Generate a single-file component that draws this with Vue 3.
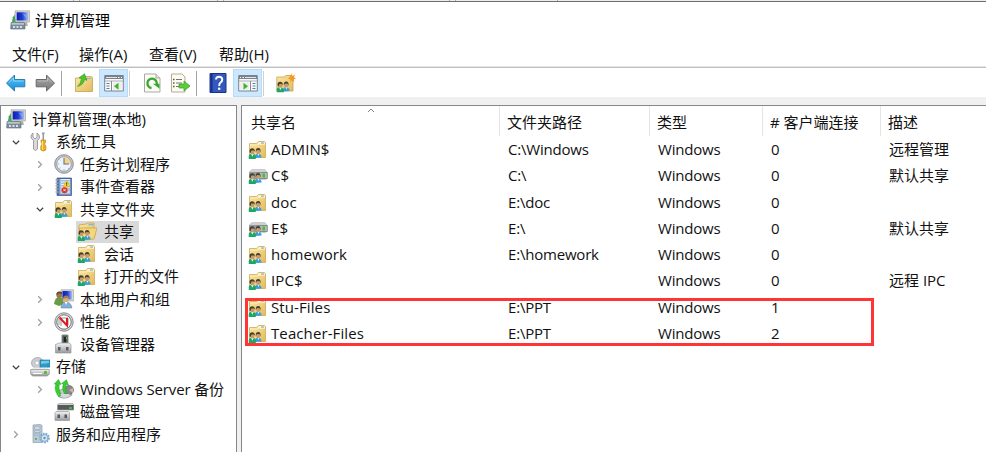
<script setup>
const menus = [
  { label: '文件(F)', width: 67 },
  { label: '操作(A)', width: 70 },
  { label: '查看(V)', width: 70 },
  { label: '帮助(H)', width: 70 },
]

const tree = [
  { label: '计算机管理(本地)', icon: 'computer', level: 0, root: true },
  { label: '系统工具', icon: 'tools', level: 1, arrow: 'open' },
  { label: '任务计划程序', icon: 'clock', level: 2, arrow: 'closed' },
  { label: '事件查看器', icon: 'events', level: 2, arrow: 'closed' },
  { label: '共享文件夹', icon: 'share', level: 2, arrow: 'open' },
  { label: '共享', icon: 'shareopen', level: 3, selected: true },
  { label: '会话', icon: 'share', level: 3 },
  { label: '打开的文件', icon: 'share', level: 3 },
  { label: '本地用户和组', icon: 'users', level: 2, arrow: 'closed' },
  { label: '性能', icon: 'perf', level: 2, arrow: 'closed' },
  { label: '设备管理器', icon: 'device', level: 2 },
  { label: '存储', icon: 'storage', level: 1, arrow: 'open' },
  { label: 'Windows Server 备份', icon: 'backup', level: 2, arrow: 'closed' },
  { label: '磁盘管理', icon: 'disk', level: 2 },
  { label: '服务和应用程序', icon: 'services', level: 1, arrow: 'closed' },
]

const shares = [
  { name: 'ADMIN$', path: 'C:\\Windows', count: 0, desc: '远程管理' },
  { name: 'C$', path: 'C:\\', count: 0, desc: '默认共享', drive: true },
  { name: 'doc', path: 'E:\\doc', count: 0, desc: '' },
  { name: 'E$', path: 'E:\\', count: 0, desc: '默认共享', drive: true },
  { name: 'homework', path: 'E:\\homework', count: 0, desc: '' },
  { name: 'IPC$', path: '', count: 0, desc: '远程 IPC' },
  { name: 'Stu-Files', path: 'E:\\PPT', count: 1, desc: '' },
  { name: 'Teacher-Files', path: 'E:\\PPT', count: 2, desc: '' },
]
</script>

<template>
  <div class="window">
    <svg class="defs" aria-hidden="true">
      <defs>
        <linearGradient id="gFolder" x1="0" y1="0" x2="1" y2="1">
          <stop offset="0" stop-color="#fbe9a6" /><stop offset="1" stop-color="#e3ba5c" />
        </linearGradient>
        <linearGradient id="gBlue" x1="0" y1="0" x2="0" y2="1">
          <stop offset="0" stop-color="#5cc8f8" /><stop offset="1" stop-color="#1689dc" />
        </linearGradient>
        <linearGradient id="gGray" x1="0" y1="0" x2="0" y2="1">
          <stop offset="0" stop-color="#aaaaaa" /><stop offset="1" stop-color="#777777" />
        </linearGradient>
        <linearGradient id="gMetal" x1="0" y1="0" x2="0" y2="1">
          <stop offset="0" stop-color="#f4f4f6" /><stop offset="1" stop-color="#96989d" />
        </linearGradient>
        <linearGradient id="gScreen" x1="0" y1="0" x2="1" y2="0">
          <stop offset="0" stop-color="#0c1eb4" /><stop offset=".5" stop-color="#1e3bd6" /><stop offset="1" stop-color="#a4bdf6" />
        </linearGradient>
      </defs>
      <symbol id="people" viewBox="0 0 14 12">
        <path d="M6.500 11V9Q7 6.500 9.500 6.500T13 9v1.500z" fill="#3a9fd6" />
        <path d="M0 12V9Q.5 6.800 3.500 6.800T7.300 9v3z" fill="#1fa566" />
        <path d="m2.500 6.800 1.400 3 1.400-3zM8.800 6.500 10 9l1-2.500z" fill="#e7f5ec" />
        <ellipse cx="3.900" cy="4.700" rx="2.100" ry="2.600" fill="#c99a6a" />
        <ellipse cx="9.700" cy="4.400" rx="2" ry="2.500" fill="#c99a6a" />
        <path d="M1.200 5.500Q.4 1.300 3.700 1.300 6.500 1.300 6.200 4.500L4.800 3.200 2.600 3.800 2.300 6zM7.300 5Q6.900 1 9.700 1t2.400 4.500L11.300 3.300 8.500 3z" fill="#46402f" />
      </symbol>
      <symbol id="folderbody" viewBox="0 0 20 20">
        <path d="M1.500 3.500H8.500L10.500 1.500H16.500L17.500 2.500V17.500H1.500z" fill="url(#gFolder)" stroke="#cfab58" stroke-width=".8" />
        <path d="M10.500 2.200H17V3.800H9.500z" fill="#fffbe9" /><path d="M13 2.500h3v1.200h-3z" fill="#67aae8" />
        <path d="M2 5H9.500L11 4.300H17" fill="none" stroke="#fff2bd" stroke-width=".9" />
      </symbol>
      <symbol id="share" viewBox="0 0 20 20">
        <use href="#folderbody" width="20" height="20" /><use href="#people" x=".5" y="7" width="14" height="12" />
      </symbol>
      <symbol id="shareopen" viewBox="0 0 20 20">
        <path d="M2 3 9 2 11 1H17V15L7 18H2z" fill="url(#gFolder)" stroke="#c9a34b" stroke-width=".8" />
        <path d="M12 2h4v1.300h-5z" fill="#78b5eb" />
        <path d="M2 6H20L17 17 5 18z" fill="#f4d67c" stroke="#c99e3b" stroke-width=".7" />
        <use href="#people" x=".5" y="7" width="14" height="12" />
      </symbol>
      <symbol id="drive" viewBox="0 0 20 20">
        <path d="M1.500 5.500 4 3.500H17L19.500 6.500V12L18 13.500H3L1 12V7z" fill="#96989d" />
        <path d="M1.500 6 4 3.500H17L19 6z" fill="#cfd0d4" /><path d="M9 6.500h10.300v6H9z" fill="#b9babd" stroke="#74767a" stroke-width=".6" />
        <path d="M14.500 7.500H17v4h-2.500z" fill="#3dc529" />
        <use href="#people" x=".5" y="6" width="14" height="12" />
      </symbol>
      <symbol id="computer" viewBox="0 0 20 20">
        <path d="M5 .8H19.500V12H5z" fill="#d5d3cb" stroke="#aaa99f" stroke-width=".7" />
        <path d="M6.700 2.300H18V10.500H6.700z" fill="url(#gScreen)" /><path d="M12 3 18 6V10z" fill="#91aaf0" opacity=".7" />
        <path d="M9 12h8l1 4H8z" fill="#b4b3ab" />
        <path d="M2.800 7.300 4.700 4.500 5.500 12H2z" fill="#3ca85b" /><path d="M1 12.500h12.500l1.500 1.200v5.300H.7z" fill="#7c8c9b" stroke="#596a78" stroke-width=".6" />
        <path d="M1.500 13H14v1.700H1.500z" fill="#bac5ce" /><path d="M3 16h2v2H3zm3.500 0h2v2h-2zm3.500 0h2v2h-2z" fill="#d6dfe5" />
      </symbol>
      <symbol id="tools" viewBox="0 0 20 20">
        <path d="M3 1V5L5 7 7 5V1Q10 3 9.500 6L7.500 8.500V17Q5.500 20 3.500 17V8.500Q.5 6.500 1 4 1.500 2 3 1z" fill="#d9d9dc" stroke="#8b8c90" stroke-width=".8" />
        <path d="M12.500 1H14V8h-1.500zM11.800.500h3L14 3h-1.500z" fill="#999" /><path d="M11 8h4.500v2l-1 2 1.300 2V18q-2.500 2-5 0v-4l1.300-2-1.100-2z" fill="#efb01f" stroke="#b57b09" stroke-width=".6" />
        <path d="M12 9h1v9h-1z" fill="#ffe073" />
      </symbol>
      <symbol id="clock" viewBox="0 0 20 20">
        <circle cx="10" cy="10" r="9.300" fill="#c4c8ce" stroke="#8b8d90" stroke-width="1" /><circle cx="10" cy="10" r="7.300" fill="#edf4fb" stroke="#8e939b" stroke-width=".8" />
        <path d="M10 10V3.300A6.700 6.700 0 0 1 16.700 10z" fill="#f7d28b" /><path d="M10 4v6h5" fill="none" stroke="#6b717c" stroke-width="1.100" />
        <path d="M3.700 10h1.200M10 15.200v1.200M5.500 5.500l.8.800M14 14l.8.800M5.500 14.500l.8-.8" stroke="#8b9db6" stroke-width=".8" />
      </symbol>
      <symbol id="events" viewBox="0 0 20 20">
        <path d="M3 1H17.500V18.500H3z" fill="#4a6fa8" stroke="#3b5a8d" stroke-width=".7" /><path d="M5.500 2H16.500V17.500H5.500z" fill="#a9c1de" /><path d="M7 2.500h9M7 5h9M7 7.500h9M7 10h9M7 15h9" stroke="#e4ecf7" />
        <path d="m12.700 3.500 3.500 6.200h-7z" fill="#ffd91c" stroke="#d0a30b" stroke-width=".5" /><path d="M12.700 5.500v2.200m0 .6v.8" stroke="#333" />
        <circle cx="10.500" cy="13.200" r="3" fill="#e13424" /><path d="m9.500 12.200 2 2m0-2-2 2" stroke="#fff" stroke-width=".9" />
        <path d="M1.500 3h3M1.500 6h3M1.500 9h3M1.500 12h3M1.500 15h3" stroke="#9da7b5" stroke-width="1.300" />
      </symbol>
      <symbol id="users" viewBox="0 0 20 20">
        <path d="M7 .7H19.500V12H7z" fill="#dad7cb" stroke="#aaa99f" stroke-width=".7" /><path d="M8.500 2H18V10.500H8.500z" fill="url(#gScreen)" />
        <path d="M0 15Q1 8 5 8t5 7l-5 2z" fill="#6d9b43" /><circle cx="5.300" cy="6" r="3" fill="#9b7553" /><path d="M2.500 6Q2 2.500 5.500 2.500T8 5L5 4z" fill="#584229" />
        <path d="M7 19q0-6 5-6t6 6z" fill="#82afd8" stroke="#527da9" stroke-width=".5" /><circle cx="12" cy="10.500" r="2.900" fill="#d8ae7a" /><path d="M9 10q0-3.500 3-3.500T15 10l-3-1z" fill="#a68251" /><path d="m11 13 1 3 1.500-3z" fill="#fff" />
      </symbol>
      <symbol id="perf" viewBox="0 0 20 20">
        <circle cx="10" cy="10" r="9.200" fill="#d7d8d9" stroke="#888" /><circle cx="10" cy="10" r="7.200" fill="#fff" stroke="#606365" stroke-width=".9" />
        <path d="M5 13V7M7 14V6h7v7" fill="none" stroke="#8b9698" stroke-width="1" /><path d="m5.500 5.500 7.500 8V6" fill="none" stroke="#e1191d" stroke-width="2" />
      </symbol>
      <symbol id="device" viewBox="0 0 20 20">
        <path d="M8 1H14V11H8z" fill="#53565a" stroke="#8e9092" /><path d="M10 3h2v5h-2z" fill="#222" /><path d="M12 3h1v2h-1z" fill="#44cc35" />
        <path d="M3 10 5 9H15l2 1.500V19H1.500V10.500z" fill="url(#gMetal)" stroke="#999" stroke-width=".7" /><path d="M4 13h2.500v3.500H4zm8 0h2.500v3.500H12z" fill="#5c5d61" />
      </symbol>
      <symbol id="storage" viewBox="0 0 20 20">
        <ellipse cx="7.500" cy="6" rx="6" ry="5.500" fill="#cbced1" stroke="#999" stroke-width=".7" /><circle cx="7" cy="6" r="2" fill="#fff" stroke="#aaa" stroke-width=".6" />
        <path d="M10 3H20V10L10 11z" fill="#299bc6" stroke="#276d91" stroke-width=".6" /><path d="m11 4 8-.2V6l-8 1z" fill="#70cae7" />
        <path d="M1 12.500 3 10.500H17l2 2z" fill="#eceded" /><path d="M.7 12.500H19.300V17l-2 2H2.500L.7 17z" fill="url(#gMetal)" stroke="#87898b" stroke-width=".7" /><path d="M14 14h3v3h-3z" fill="#61bd30" /><path d="M3 16.500h9" stroke="#fff" />
      </symbol>
      <symbol id="backup" viewBox="0 0 20 20">
        <path d="M3 12Q9 9 16 10L18 16Q12 21 5 18z" fill="#c6c9cc" stroke="#777" stroke-width=".6" /><circle cx="15" cy="11" r="4.500" fill="#85888d" stroke="#606467" stroke-width=".7" /><path d="m15 11 4-2v5z" fill="#e6ae92" />
        <path d="M4.500 17.500Q-.5 11 2 5.500L.3 5 4.500 .5 7 5.500 5.300 5Q3.900 11 7.500 16zM10.500 15Q7.500 10 9.300 5L7.500 4.500 12.500 .8 14.500 6 12.300 5.500Q10.800 11 12.500 15z" fill="#35cf30" stroke="#269d28" stroke-width=".5" />
        <path d="M6.500 15h9v2q-4.500 3-8 1z" fill="#d5d7da" />
      </symbol>
      <symbol id="disk" viewBox="0 0 20 20">
        <path d="M3.500 3 5 1.500H18.500L19.800 3V8H3.500z" fill="#55595a" stroke="#999" stroke-width=".7" /><path d="M4 3 5 1.500H18.500L19.500 3z" fill="#ced0d2" /><path d="M15 6h3" stroke="#43d437" stroke-width="1.500" />
        <path d="M2 9.500H14.500l1 1V18.500H1V10.500z" fill="url(#gMetal)" stroke="#999" stroke-width=".7" /><path d="M3.500 12.500H6V16H3.500zm7 0H13V16h-2.500z" fill="#55565a" />
      </symbol>
      <symbol id="services" viewBox="0 0 20 20">
        <path d="M3 1 10 .5 12 1.500V18.500H3z" fill="#b9c9d7" stroke="#8b9eaf" stroke-width=".7" /><path d="M4.500 3H10v2H4.500zm0 4H10v1.500H4.500zm0 3H10v1H4.500z" fill="#edf4f9" stroke="#7c8e9c" stroke-width=".5" /><path d="M5 14h2v2H5z" fill="#5bbb57" />
        <circle cx="14.500" cy="14" r="4.300" fill="#bfd6ea" stroke="#7aa8cd" stroke-width="2" stroke-dasharray="1.700 .9" /><circle cx="14.500" cy="14" r="3.300" fill="#d8e8f4" stroke="#86b0d1" /><circle cx="14.500" cy="14" r="1.200" fill="#648eb1" />
      </symbol>
      <symbol id="back" viewBox="0 0 20 20"><path d="M.5 10.200 8.500 2V6.500H18.800V13.800H8.500V18z" fill="url(#gBlue)" stroke="#277fae" stroke-width="1" stroke-linejoin="round" /><path d="M3 9.700 7.500 5V8H17.500" fill="none" stroke="#8be0fb" stroke-width=".8" /></symbol>
      <symbol id="forward" viewBox="0 0 20 20"><path d="M19.500 10.200 11.500 2V6.500H1.200V13.800H11.500V18z" fill="url(#gGray)" stroke="#696969" stroke-width="1" stroke-linejoin="round" /><path d="M2.500 8H12.500V5L17 9.700" fill="none" stroke="#c1c1c1" stroke-width=".8" /></symbol>
      <symbol id="up" viewBox="0 0 20 20"><path d="M1.500 5H10L11.500 3.500H17.500L18.500 5V18.500H1.500z" fill="url(#gFolder)" stroke="#c4a151" stroke-width=".8" /><path d="M12 5h5v1h-5z" fill="#78b6e7" /><path d="M3.500 13.500Q9.500 12 10.500 6.500L13 7.300 10.500 .8 5 4.800 7.500 5.600Q7 10.500 3.500 13.500z" fill="#4bc52c" stroke="#33961e" stroke-width=".6" /></symbol>
      <symbol id="panel" viewBox="0 0 20 20"><path d="M.7 2.500H19.300V18H.7z" fill="#fafafa" stroke="#7c8289" /><path d="M1 3h18v3H1z" fill="#79828d" /><path d="M2 4.500h11" stroke="#dfe5eb" /><path d="M14 4.500h1.500M17 4.500h1" stroke="#fff" /><path d="M1 8h18" stroke="#a9afb6" /><path d="M7.500 8v10" stroke="#868c94" /><path d="M2.500 10.500h3M2.500 13h3M2.500 15.500h3" stroke="#5380b0" stroke-width="1.200" /><path d="M9 9.500h9v7H9z" fill="#eee" /><path d="m14.500 9.700-4.500 3.500 4.500 3.500z" fill="#3db42f" /></symbol>
      <symbol id="page" viewBox="0 0 20 20"><path d="M2.500 1H14L18 5V19H2.500z" fill="#fdfdf6" stroke="#aaa9a1" /><path d="M14 1v4h4" fill="#e9e9df" stroke="#aaa9a1" /></symbol>
      <symbol id="refresh" viewBox="0 0 20 20"><use href="#page" width="20" height="20" /><path d="M9.500 15A4.700 4.700 0 1 1 14.500 12" fill="none" stroke="#35aa30" stroke-width="2.300" /><path d="M11 10.800h6.500v5z" fill="#35aa30" /></symbol>
      <symbol id="export" viewBox="0 0 20 20"><path d="M1.500 1H12L15 4V19H1.500z" fill="#fffce9" stroke="#b0ad9d" /><path d="M6 6.500h6M6 10h6M6 13.500h6" stroke="#70729d" /><path d="M3 6.500h1.500M3 10h1.500M3 13.500h1.500" stroke="#555" stroke-width="1.300" /><path d="M9 11H14V8L20 13l-6 5v-3H9z" fill="#5bcc3c" stroke="#3d9e28" stroke-width=".7" /></symbol>
      <symbol id="help" viewBox="0 0 20 20"><path d="M2 .5H18V19.500H2z" fill="#3558bd" stroke="#1a3489" /><path d="M2.500 1h2v18h-2z" fill="#16318f" /><path d="M8 6.500Q8 3.700 11 3.700t3.300 2.800Q14.300 8.500 12.300 9.800 11.200 10.700 11.200 13" fill="none" stroke="#fff" stroke-width="1.900" /><circle cx="11.200" cy="15.800" r="1.300" fill="#fff" /></symbol>
      <symbol id="newshare" viewBox="0 0 20 20"><path d="M.8 4H8L10 2.500H15.500L17 4V18H.8z" fill="url(#gFolder)" stroke="#c9a34b" stroke-width=".8" /><use href="#people" x=".5" y="7.500" width="14" height="12" /><path d="m15.500 0 1 3 2.500-1.200L18 4.200l2 1.500-2.200.5.600 3-2.400-1.600-2 1.500.300-2.800-2.500-.8 2.200-1.400-.8-2.300 2 .7z" fill="#f29b26" /></symbol>
    </svg>

    <div class="strip"><i class="tab one"></i><i class="tab two"></i><i class="tab three"></i><i class="tab four"></i></div>
    <header class="title"><svg class="ico"><use href="#computer" /></svg><span>计算机管理</span></header>
    <nav class="menu"><span v-for="m in menus" :key="m.label" :style="{ width: m.width + 'px' }">{{ m.label }}</span></nav>
    <div class="toolbar">
      <svg class="ico"><use href="#back" /></svg>
      <svg class="ico fwd"><use href="#forward" /></svg>
      <i class="sep s1"></i>
      <svg class="ico up"><use href="#up" /></svg>
      <span class="toggle"><svg class="ico"><use href="#panel" /></svg></span>
      <i class="sep pale"></i>
      <svg class="ico refresh"><use href="#refresh" /></svg>
      <svg class="ico export"><use href="#export" /></svg>
      <i class="sep s3"></i>
      <svg class="ico help"><use href="#help" /></svg>
      <span class="toggle"><svg class="ico mirror"><use href="#panel" /></svg></span>
      <i class="sep pale"></i>
      <svg class="ico newshare"><use href="#newshare" /></svg>
    </div>

    <main class="body">
      <aside class="tree">
        <div v-for="n in tree" :key="n.label" class="node" :class="'l' + n.level">
          <span v-if="!n.root" class="arrow">
            <svg v-if="n.arrow === 'open'" viewBox="0 0 10 10"><path class="open" d="M1.800 3.700 5 6.900 8.200 3.700" /></svg>
            <svg v-if="n.arrow === 'closed'" viewBox="0 0 10 10"><path class="closed" d="M3.200 2.300 6.400 5.500 3.200 8.700" /></svg>
          </span>
          <span class="item" :class="{ selected: n.selected }">
            <svg class="ico"><use :href="'#' + n.icon" /></svg>
            <span class="label" :class="{ latin: n.icon === 'backup' }">{{ n.label }}</span>
          </span>
        </div>
      </aside>
      <section class="list">
        <div class="grid head">
          <span class="c0">共享名<svg class="sort" viewBox="0 0 8 5"><path d="M1 4 4 1 7 4" /></svg></span>
          <span>文件夹路径</span><span>类型</span><span># 客户端连接</span><span>描述</span>
        </div>
        <div v-for="s in shares" :key="s.name" class="grid row">
          <span class="name"><svg class="ico"><use :href="s.drive ? '#drive' : '#share'" /></svg>{{ s.name }}</span>
          <span>{{ s.path }}</span><span>Windows</span><span>{{ s.count }}</span><span class="desc">{{ s.desc }}</span>
        </div>
        <div class="marker"></div>
      </section>
    </main>
  </div>
</template>

<style>
body { margin: 0; overflow: hidden; }
</style>

<style scoped>
.window { width: 986px; height: 452px; display: flex; flex-direction: column; overflow: hidden; background: #fff; color: #111; font: 15px/20px "Open Sans", "Noto Sans CJK SC", sans-serif; white-space: nowrap; box-sizing: border-box; }
.defs { position: absolute; width: 0; height: 0; }
.ico { width: 20px; height: 20px; flex: none; display: block; }
.strip { height: 1px; flex: none; display: flex; background: #eee; border-bottom: 1px solid #6e6e6e; }
.tab { width: 5px; border: solid #aaa; border-width: 0 1px; }
.one { margin-left: 73px; }
.two { margin-left: 137px; }
.three { margin-left: 225px; }
.four { margin-left: 101px; border-right: 0; }
.title { height: 36px; flex: none; display: flex; align-items: center; gap: 5px; padding-left: 10px; color: #000; }
.menu { height: 29px; flex: none; display: flex; align-items: center; padding-left: 12px; border-bottom: 1px solid #c0c0c0; box-shadow: 0 -1px #e4e4e4 inset; }
.menu span { padding-top: 2px; }
.toolbar { height: 29px; flex: none; display: flex; align-items: center; padding-left: 6px; padding-top: 1px; box-sizing: border-box; }
.fwd { margin-left: 9px; }
.sep { width: 1px; height: 25px; background: #a5a5a5; }
.pale { background: #d0d0d0; margin-left: 1px; }
.s1 { margin-left: 6px; }
.up { margin-left: 12px; }
.toggle { width: 27px; height: 26px; margin-left: 5px; border: 1px solid #b5dcfc; background: #cce8ff; display: flex; align-items: center; justify-content: center; }
.refresh { margin-left: 12px; }
.export { margin-left: 8px; }
.s3 { margin-left: 6px; }
.help { margin-left: 11px; }
.mirror { transform: scaleX(-1); }
.newshare { margin-left: 12px; }
.body { flex: 1; min-height: 0; display: flex; gap: 4px; padding-top: 8px; background: #f0f0f0; }
.tree { width: 237px; box-sizing: border-box; flex: none; border: 1px solid #828790; border-bottom: 0; background: #fff; padding-top: 2px; overflow: hidden; }
.node { height: 22.500px; display: flex; align-items: center; }
.label { position: relative; top: -.5px; }
.l0 { padding-left: 5px; }
.l1 { padding-left: 9px; }
.l2 { padding-left: 33px; }
.l3 { padding-left: 57px; }
.arrow { width: 12px; margin-right: 8px; display: flex; justify-content: center; }
.arrow svg { width: 10px; height: 10px; }
.arrow path { fill: none; stroke-width: 1.300; }
.open { stroke: #404040; }
.closed { stroke: #a0a0a0; }
.item { display: flex; align-items: center; height: 22px; gap: 6px; padding-right: 5px; }
.l3 .item .ico { margin-left: -1px; margin-right: 1px; }
.selected { background: #d9d9d9; margin-left: -2px; padding-left: 2px; }
.latin { letter-spacing: -.150px; }
.list { flex: 1; position: relative; border: 1px solid #828790; border-width: 1px 0 0 1px; background: #fff; }
.grid { display: grid; grid-template-columns: 258px 150px 113px 118px 1fr; align-items: center; }
.head { height: 30px; }
.head span { height: 30px; line-height: 33px; padding-left: 8px; border-right: 1px solid #e5e5e5; box-sizing: border-box; }
.head span:nth-child(2), .head span:nth-child(3), .head span:nth-child(4), .head span:last-child { padding-left: 7px; }
.head span:last-child { border: 0; }
.head .c0 { padding-left: 9px; position: relative; }
.sort { position: absolute; left: 125px; top: 2px; width: 8px; height: 5px; }
.sort path { fill: none; stroke: #888; }
.row { height: 26.250px; }
.row > span { padding-left: 8px; letter-spacing: -.200px; }
.row .desc { letter-spacing: 0; }
.row .name { display: flex; align-items: center; gap: 3px; padding-left: 6px; letter-spacing: .1px; }
.row .ico { position: relative; top: 1px; }
.marker { position: absolute; left: 3px; top: 192px; width: 629px; height: 48px; box-sizing: border-box; border: 3px solid #ff3434; }
</style>
